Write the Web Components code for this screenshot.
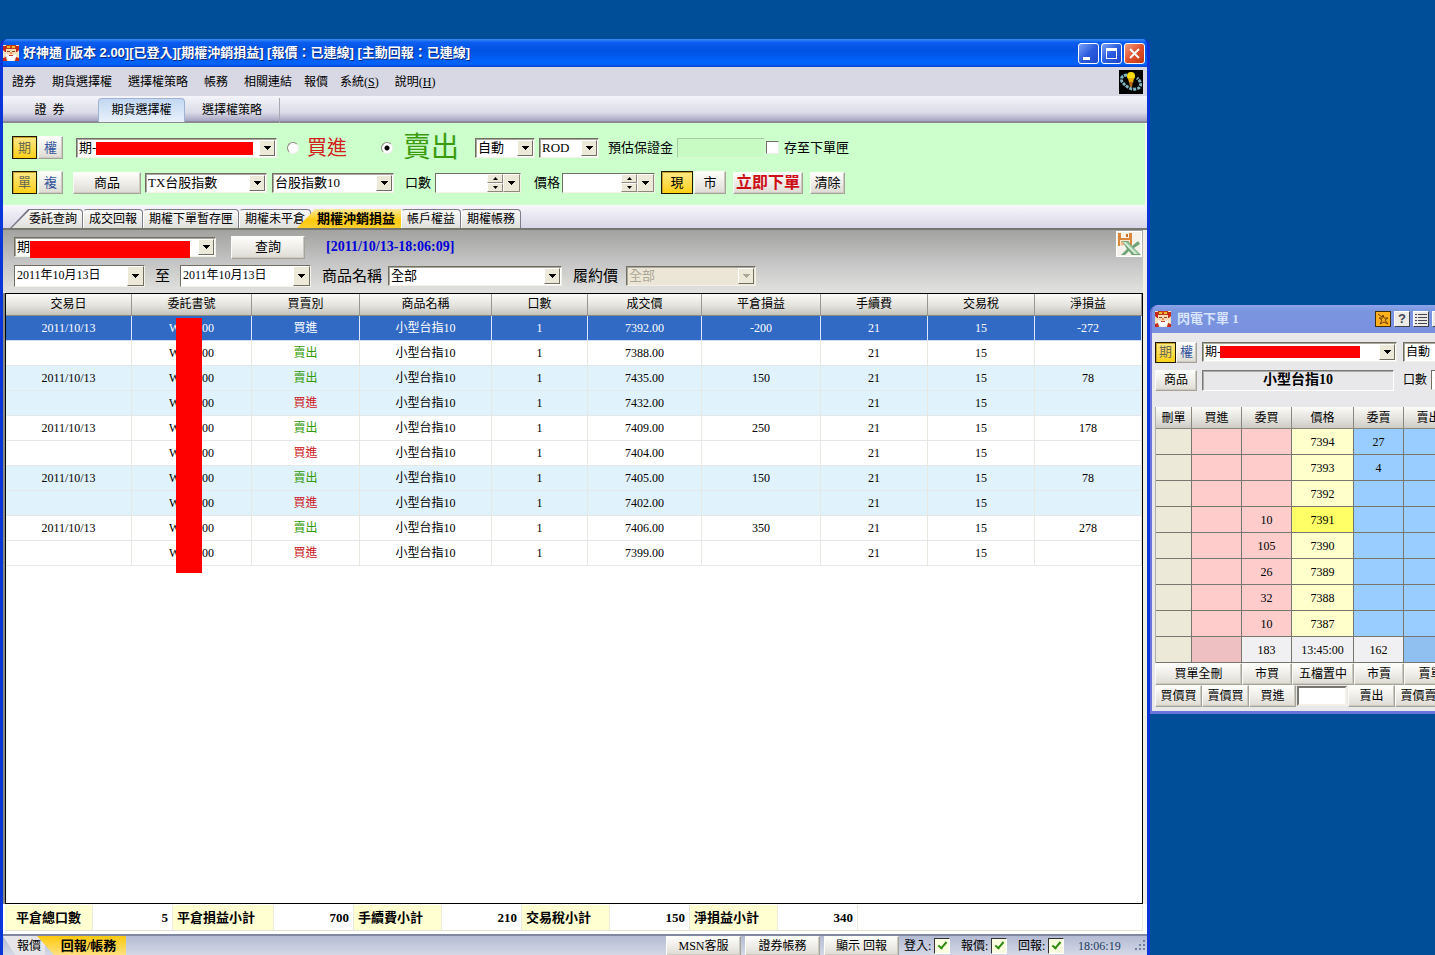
<!DOCTYPE html>
<html lang="zh-Hant">
<head>
<meta charset="utf-8">
<title>好神通</title>
<style>
html, body { height: 100%; margin: 0; }
body { font: 12px/16px "Liberation Serif", "Noto Sans CJK TC", sans-serif; color: #000; background: #004e98; overflow: hidden; }
</style>
</head>
<body>
<trade-desktop></trade-desktop>
<script>
const BASE = `
  *, *::before, *::after { box-sizing: border-box; }
  button, input, select { font: inherit; color: inherit; margin: 0; border-radius: 0; }
  button { padding: 0; white-space: nowrap; }
  svg { display: block; }
`;
const define = (name, html) => {
  customElements.define(name, class extends HTMLElement {
    connectedCallback() {
      if (this.shadowRoot) return;
      const t = document.createElement('template');
      t.innerHTML = typeof html === 'function' ? html(this) : html;
      const root = this.attachShadow({ mode: 'open' });
      const s = document.createElement('style');
      s.textContent = BASE;
      root.append(s, t.content.cloneNode(true));
    }
  });
};
const attr = (el, n, d = '') => el.getAttribute(n) ?? d;
const ARROW = '<svg width="7" height="4" viewBox="0 0 7 4" shape-rendering="crispEdges"><path d="M0 0h7L3.5 4z" fill="currentColor"/></svg>';

/* Mascot in the title bars */
define('mascot-icon', `
  <style>:host { display: block; flex: none; width: 16px; height: 16px; }</style>
  <svg width="16" height="16" viewBox="0 0 16 16">
    <rect width="16" height="16" fill="#f6e3c0"/>
    <path d="M0 1h3v6H2L0 5zM16 1h-3v6h1l2-2z" fill="#c8281c"/>
    <path d="M3 0h10v4H3z" fill="#c23a1c"/><path d="M4 1h8v2H4z" fill="#f3b92c"/><path d="M7 0h2v3H7z" fill="#d8401c"/>
    <path d="M3 4h10v5l-2 4H5L3 9z" fill="#fbd9b4"/>
    <path d="M4 6h3v1H4zM9 6h3v1H9z" fill="#8a4a22"/>
    <path d="M7 7h2v2H7z" fill="#e9915a"/>
    <path d="M3 9l3 1h4l3-1v3l-3 4H6l-3-4z" fill="#fff"/>
    <path d="M6 10h4v1H6z" fill="#d23b26"/>
    <path d="M0 13l3-1 1 4H0zM16 13l-3-1-1 4h4z" fill="#c8281c"/>
  </svg>`);

/* Push button: plain, pressed (gold) or action (red text) */
define('xp-button', `
  <style>
    :host { display: block; height: 22px; }
    button { display: block; width: 100%; height: 100%; line-height: 18px; text-align: center;
      background: linear-gradient(#fdfdfb, #eeede8 50%, #dddbd3); border: 1px solid; border-color: #fbfbf8 #a5a39a #a5a39a #fbfbf8; box-shadow: inset -1px -1px #cbc9c0; }
    :host([blue]) button { color: #33549c; }
    :host([pressed]) button { background: linear-gradient(#ffe98a, #fdd017); border: 1px solid #201800; box-shadow: inset 1px 1px #c9a22a; }
    :host([pressed][blue]) button { color: #6a6a50; }
    :host([action]) button { color: #cc1018; font-size: 16px; font-weight: bold; }
  </style>
  <button type="button"><slot></slot></button>`);

/* Drop-down list with an optional leading label and a masked part */
define('xp-combo', el => `
  <style>
    :host { display: flex; align-items: center; gap: var(--label-gap, 6px); }
    label { font-size: var(--label-size, 13px); white-space: nowrap; }
    .box { position: relative; flex: none; width: var(--w, 60px); height: 20px; }
    select { appearance: none; width: 100%; height: 100%; padding: 0 18px 0 2px; background: #fff; line-height: 16px;
      border: 1px solid; border-color: #716f64 #f4f2e8 #f4f2e8 #716f64; outline: 0; box-shadow: inset 1px 1px #aaa89c; font-size: var(--size, 13px); opacity: 1; }
    select:disabled { background: #ece6d6; color: #aca899; }
    .drop { position: absolute; right: 2px; top: 2px; width: 16px; height: 16px; display: grid; place-items: center; pointer-events: none;
      background: #ece9d8; border: 1px solid; border-color: #fff #716f64 #716f64 #fff; }
    select:disabled ~ .drop { color: #aca899; }
    .mask { position: absolute; left: var(--mask-left); width: var(--mask-width); top: 4px; height: var(--mask-height, 13px); background: #f00; pointer-events: none; }
  </style>
  ${el.hasAttribute('label') ? `<label for="s">${attr(el, 'label')}</label>` : ''}
  <span class="box">
    <select id="s" aria-label="${attr(el, 'label', attr(el, 'name', '帳號'))}" ${el.hasAttribute('disabled') ? 'disabled' : ''}><option>${attr(el, 'value')}</option></select>
    <span class="drop">${ARROW}</span>
    ${el.hasAttribute('masked') ? '<span class="mask"></span>' : ''}
  </span>`);

/* Date box with its own drop button */
define('xp-date', el => `
  <style>
    :host { display: flex; position: relative; width: 131px; height: 22px; background: #fff; border: 1px solid; border-color: #716f64 #f4f2e8 #f4f2e8 #716f64; }
    input { flex: 1; min-width: 0; border: 0; padding: 0 0 2px 2px; background: none; }
    button { width: 17px; height: 20px; display: grid; place-items: center; background: #ece9d8; border: 1px solid; border-color: #fff #716f64 #716f64 #fff; }
  </style>
  <input type="text" aria-label="${attr(el, 'name')}" value="${attr(el, 'value')}"><button type="button" aria-label="選擇日期">${ARROW}</button>`);

/* Number box with up/down and drop buttons */
define('xp-spin', el => `
  <style>
    :host { display: flex; align-items: center; gap: 4px; }
    label { font-size: 13px; white-space: nowrap; }
    :host([small]) label { font-size: 12px; }
    .box { display: flex; width: var(--w, 86px); height: 20px; background: #fff; border: 1px solid; border-color: #716f64 #f4f2e8 #f4f2e8 #716f64; }
    input { flex: 1; min-width: 0; border: 0; background: none; padding: 0 2px; }
    .steps { display: grid; width: 16px; }
    button { display: grid; place-items: center; background: #ece9d8; border: 1px solid; border-color: #fff #8d8a7d #8d8a7d #fff; }
    .drop { width: 17px; }
  </style>
  <label for="n">${attr(el, 'label')}</label>
  <span class="box"><input id="n" type="text" value="${attr(el, 'value')}">
    <span class="steps">
      <button type="button" aria-label="增加"><svg width="5" height="3" viewBox="0 0 5 3"><path d="M0 3h5L2.5 0z"/></svg></button>
      <button type="button" aria-label="減少"><svg width="5" height="3" viewBox="0 0 5 3"><path d="M0 0h5L2.5 3z"/></svg></button>
    </span>
    <button class="drop" type="button" aria-label="選單">${ARROW}</button></span>`);

/* Window frame: title bar, caption tools, body */
define('xp-window', el => `
  <style>
    :host { display: flex; flex-direction: column; border: solid #0a35d8; border-width: 0 3px; border-radius: 7px 7px 0 0; background: #0a35d8; overflow: hidden; }
    header { display: flex; align-items: center; flex: none; height: 28px; gap: 4px; color: #fff; font: bold 13px/18px "Liberation Sans", "Noto Sans CJK TC", sans-serif; text-shadow: 1px 1px #0a2a80; white-space: nowrap;
      background: linear-gradient(#3c8cf8, #0a5ef0 12%, #0052e0 40%, #0060f8 75%, #0162fb 90%, #0245c8); }
    :host(:not([tool])) header { margin: 0 -3px; padding: 0 3px; }
    .tools { margin-left: auto; padding-right: 2px; display: flex; gap: 2px; }
    .tools button { width: 21px; height: 21px; padding: 0; border: 1px solid #fff; border-radius: 3px; background: linear-gradient(135deg, #7ba2f5, #2a5ce0 50%, #2049c8); }
    .tools .close { background: linear-gradient(135deg, #f0a080, #e0502c 50%, #c03810); }
    .main { flex: 1; min-height: 0; display: flex; flex-direction: column; background: #f2f0e4; }
    :host([tool]) { border: solid #6a74dc; border-width: 0 2px 3px; background: #6a74dc; border-radius: 8px 8px 0 0; }
    :host([tool]) header { margin: 0 -2px; padding: 0 0 0 5px; gap: 6px; color: #d8e4fc; text-shadow: none; font-family: "Liberation Serif", "Noto Sans CJK TC", sans-serif;
      background: linear-gradient(#8ca4ec, #7a96df 20%, #7a90e0); }
    :host([tool]) .tools { padding: 0; gap: 3px; }
    :host([tool]) .tools button { width: 16px; height: 16px; border-radius: 0; border: 1px solid; border-color: #fff #40404c #40404c #fff; background: #ecebe6; color: #445; display: grid; place-items: center; font: bold 13px/14px "Liberation Sans", sans-serif; }
    :host([tool]) .tools .on { background: #ffb01c; border-color: #403008; color: #6a4000; }
  </style>
  <header><mascot-icon></mascot-icon><span>${attr(el, 'caption')}</span>
    <span class="tools">${el.hasAttribute('tool') ? `
      <button class="on" type="button" aria-label="釘選"><svg width="12" height="12" viewBox="0 0 12 12" fill="none" stroke="currentColor"><path d="M1 1l4 3 1-2 1 3h4L8 7l3 4-4-2-4 2 2-4-3-2h4"/></svg></button>
      <button type="button">?</button>
      <button type="button" aria-label="清單"><svg width="12" height="12" viewBox="0 0 12 12" stroke="currentColor" shape-rendering="crispEdges"><path d="M0 1.5h2M3 1.5h9M0 4.5h2M3 4.5h9M0 7.5h2M3 7.5h9M0 10.5h2M3 10.5h9"/></svg></button>
      <button type="button" aria-label="最小化"></button><button type="button" aria-label="最大化"></button><button type="button" aria-label="關閉"></button>` : `
      <button type="button" aria-label="最小化"><svg width="19" height="19" viewBox="0 0 19 19"><path d="M4 13h7v3H4z" fill="#fff"/></svg></button>
      <button type="button" aria-label="最大化"><svg width="19" height="19" viewBox="0 0 19 19"><path d="M4 4h11v11H4zM5 7v7h9V7z" fill="#fff" fill-rule="evenodd"/></svg></button>
      <button class="close" type="button" aria-label="關閉"><svg width="19" height="19" viewBox="0 0 19 19" stroke="#fff" stroke-width="2"><path d="M5 5l9 9M14 5l-9 9"/></svg></button>`}
    </span></header>
  <div class="main"><slot></slot></div>`);

/* Menu line with the bulb picture at its end */
define('menu-bar', `
  <style>
    :host { display: flex; align-items: center; height: 29px; flex: none; background: #d8d8e4; padding: 0 4px 0 9px; }
    nav, .books { display: flex; gap: 16px; }
    nav { gap: 12px; }
    a { color: inherit; text-decoration: none; white-space: nowrap; }
    svg { margin-left: auto; }
  </style>
  <nav><span class="books"><a href="#">證券</a><a href="#">期貨選擇權</a><a href="#">選擇權策略</a><a href="#">帳務</a><a href="#">相關連結</a></span><a href="#">報價</a><span class="books"><a href="#">系統(<u>S</u>)</a><a href="#">說明(<u>H</u>)</a></span></nav>
  <svg width="24" height="24" viewBox="0 0 24 24"><rect width="24" height="24"/>
    <path d="M8 5C2 5 1 10 4 13s7 7 13 6 6-7 1-11" fill="none" stroke="#7fb4c0" stroke-width="3" stroke-dasharray="3 1"/>
    <circle cx="12" cy="6" r="4" fill="#f8dc10"/><path d="M9 8h6l-1 5h-4z" fill="#e8b010"/><path d="M10 12h4l-1 5h-2z" fill="#b06818"/></svg>`);

/* Product switch under the menu */
define('product-switch', `
  <style>
    :host { display: flex; flex: none; height: 27px; padding-left: 1px; align-items: flex-end; background: linear-gradient(#f4f4fa, #dcdce8 60%, #a8a6c4 92%, #8c8a96 93%); }
    button { border: 0; background: none; height: 25px; padding: 0 0 2px; }
    .stock { width: 94px; padding-right: 3px; } .opt { width: 95px; border-right: 1px solid #a8a8b4; }
    .on { width: 87px; height: 24px; margin-bottom: 1px; border: 1px solid #9fb2d4; border-bottom: 0; border-radius: 4px 4px 0 0; background: linear-gradient(#c3d8f2, #e9f1fc); }
  </style>
  <button class="stock" type="button">證&nbsp; 券</button><button class="on" type="button">期貨選擇權</button><button class="opt" type="button">選擇權策略</button>`);

/* Order entry */
define('order-form', `
  <style>
    :host { display: grid; flex: none; height: 82px; align-content: start; padding: 13px 0 0 9px; row-gap: 12px; background: #ccffcc; border-right: 2px solid #f4f4f0; }
    .row { display: grid; height: 23px; align-items: center; justify-content: start; font-size: 13px; }
    .one { grid-template-columns: 64px 211px 94px 94px 64px 69px 158px auto; }
    .two { grid-template-columns: 61px 72px 127px 133px 129px 127px 72px 77px 35px; }
    .pair { display: flex; gap: 1px; }
    .pair xp-button { width: 25px; height: 23px; }
    .wide xp-button { width: 32px; }
    .goods { width: 68px; } .action { width: 70px; }
    .radio { display: flex; align-items: center; gap: 8px; height: 23px; white-space: nowrap; }
    .radio input { appearance: none; width: 12px; height: 12px; flex: none; border-radius: 50%; border: 1px solid #8a887c; border-right-color: #eee; border-bottom-color: #eee; background: #fff; }
    .radio input:checked { background: radial-gradient(circle, #000 0 2px, #fff 3px); }
    .buy { color: #d02018; font-size: 20px; } .sell { color: #3a9c0c; font-size: 28px; gap: 10px; line-height: 23px; }
    .margin { display: flex; align-items: center; gap: 4px; }
    .margin input { width: 88px; height: 20px; background: #c8fac4; border: 1px solid #a8cca4; border-right-color: #d8f8d4; border-bottom-color: #d8f8d4; }
    .tick { display: flex; align-items: center; gap: 5px; }
    .tick input { appearance: none; width: 13px; height: 13px; background: #fff; border: 1px solid; border-color: #716f64 #eee #eee #716f64; }
  </style>
  <div class="row one">
    <span class="pair"><xp-button pressed blue>期</xp-button><xp-button blue>權</xp-button></span>
    <xp-combo value="期-" masked style="--w:201px;--mask-left:20px;--mask-width:157px"></xp-combo>
    <label class="radio buy"><input type="radio" name="side">買進</label>
    <label class="radio sell"><input type="radio" name="side" checked>賣出</label>
    <xp-combo name="開平倉" value="自動"></xp-combo>
    <xp-combo name="委託條件" value="ROD"></xp-combo>
    <span class="margin"><label for="m">預估保證金</label><input id="m" type="text" readonly></span>
    <label class="tick"><input type="checkbox">存至下單匣</label>
  </div>
  <div class="row two">
    <span class="pair"><xp-button pressed blue>單</xp-button><xp-button blue>複</xp-button></span>
    <xp-button class="goods">商品</xp-button>
    <xp-combo name="商品" value="TX台股指數" style="--w:122px"></xp-combo>
    <xp-combo name="契約" value="台股指數10" style="--w:122px"></xp-combo>
    <xp-spin label="口數"></xp-spin>
    <xp-spin label="價格" style="--w:93px;gap:2px"></xp-spin>
    <span class="pair wide"><xp-button pressed>現</xp-button><xp-button>市</xp-button></span>
    <xp-button action class="action">立即下單</xp-button>
    <xp-button>清除</xp-button>
  </div>`);

/* Folder tabs of the report area */
define('report-tabs', `
  <style>
    :host { display: flex; box-sizing: border-box; flex: none; height: 25px; padding: 4px 0 0 7px; background: linear-gradient(#f8f8fc, #d8d6e6); border-bottom: 2px solid #77776f; }
    button { position: relative; border: 0; background: none; height: 19px; padding: 0 6px; line-height: 18px; z-index: 0; }
    button::before { content: ""; position: absolute; inset: 0; z-index: -1; border: 1px solid #7c7c8c; border-left-color: #fff; border-bottom: 0; border-radius: 4px 4px 0 0; background: linear-gradient(#fafafa, #dfdfdc); }
    .first { padding-left: 19px; }
    .first::before { border-left: 0; clip-path: polygon(18px 0, 100% 0, 100% 100%, 0 100%); background: linear-gradient(to bottom right, #7c7c8c 50%, transparent 54%) 0 0 / 19px 19px no-repeat, linear-gradient(#fafafa, #dfdfdc); }
    .on { font-size: 13px; font-weight: bold; z-index: 1; }
    .on::before { left: -14px; border: 0; border-radius: 0; clip-path: polygon(18px 0, 100% 0, 100% 100%, 0 100%); background: linear-gradient(#ffe89a, #fdc90c 60%, #fdd030); }
  </style>
  <button class="first" type="button">委託查詢</button><button type="button">成交回報</button><button type="button">期權下單暫存匣</button><button type="button">期權未平倉</button><button class="on" type="button">期權沖銷損益</button><button type="button">帳戶權益</button><button type="button">期權帳務</button>`);

/* Search line above the result table */
define('query-panel', `
  <style>
    :host { display: grid; flex: none; height: 63px; padding: 1px 1px 0 11px; align-content: start; background: linear-gradient(#a2a2a0, #c4c4c4 50%, #e2e2e0); border-right: 4px solid #f2f0e4; }
    .row { display: grid; align-items: center; justify-content: start; }
    .one { grid-template-columns: 217px 95px 1fr 26px; justify-content: stretch; height: 32px; }
    .two { grid-template-columns: 141px 25px 142px 251px auto; height: 26px; }
    .query { width: 74px; height: 23px; font-size: 13px; }
    time { color: #0000d8; font: bold 14px/18px "Liberation Serif", serif; }
    .to { font-size: 15px; }
    .excel { align-self: start; width: 26px; height: 26px; border: 1px solid #fff; background: #f4f2ea; }
  </style>
  <div class="row one">
    <xp-combo value="期" masked style="--w:202px;--mask-left:16px;--mask-width:160px;--mask-height:17px"></xp-combo>
    <xp-button class="query">查詢</xp-button>
    <time datetime="2011-10-13T18:06:09">[2011/10/13-18:06:09]</time>
    <button class="excel" type="button" aria-label="匯出 Excel"><svg width="24" height="24" viewBox="0 0 24 24">
      <path d="M1 1h14v13H1z" fill="#d8883c"/><path d="M4 1h8v5H4z" fill="#fff4e4"/><path d="M9 2h2v3H9z" fill="#c8702c"/><path d="M3 8h10v6H3z" fill="#fbe6cc"/><path d="M4 10h8M4 12h8" stroke="#d8883c"/>
      <path d="M5 9h6l4 5 6-5 2 3-6 4 7 7h-9l-3-4-4 4H4l6-6z" fill="#6fa477"/><path d="M6 10h4l12 12h-5z" fill="#a9cfae"/><path d="M6 10h2l12 12h-2z" fill="#dff0de"/></svg></button>
  </div>
  <div class="row two">
    <xp-date name="起始日" value="2011年10月13日"></xp-date><span class="to">至</span><xp-date name="結束日" value="2011年10月13日"></xp-date>
    <xp-combo label="商品名稱" value="全部" style="--label-size:15px;--w:174px"></xp-combo>
    <xp-combo label="履約價" value="全部" disabled style="--label-size:15px;--label-gap:8px;--w:130px"></xp-combo>
  </div>`);

/* Closed positions */
const HEADS = ['交易日', '委託書號', '買賣別', '商品名稱', '口數', '成交價', '平倉損益', '手續費', '交易稅', '淨損益'];
const WIDTHS = [126, 120, 108, 132, 96, 114, 119, 107, 107, 107];
const DEALS = [
  ['2011/10/13', '買進', '7392.00', '-200', '-272'], ['', '賣出', '7388.00', '', ''],
  ['2011/10/13', '賣出', '7435.00', '150', '78'], ['', '買進', '7432.00', '', ''],
  ['2011/10/13', '賣出', '7409.00', '250', '178'], ['', '買進', '7404.00', '', ''],
  ['2011/10/13', '賣出', '7405.00', '150', '78'], ['', '買進', '7402.00', '', ''],
  ['2011/10/13', '賣出', '7406.00', '350', '278'], ['', '買進', '7399.00', '', '']
];
define('deal-grid', () => `
  <style>
    :host { display: flex; flex: 1; min-height: 0; border-left: 2px solid #8a8a84; padding-right: 4px; }
    .sheet { position: relative; flex: 1; background: #fff; border: 1px solid #000; overflow: hidden; }
    table { width: 100%; table-layout: fixed; border-collapse: separate; border-spacing: 0; }
    th { height: 22px; padding: 0 0 2px; font-weight: normal; background: linear-gradient(#fbfbf8, #e4e3dd 55%, #c4c3bc); border-right: 1px solid #9a988e; border-bottom: 1px solid #8a887e; }
    td { height: 25px; padding: 0; text-align: center; border-right: 1px solid #e8e8e0; border-bottom: 1px solid #e4e8e8; }
    tr.alt td { background: #e0f2fc; }
    tr.sel td { background: #316ac5; color: #fff; border-right-color: #dce8fc; border-bottom-color: #c8dcf8; }
    .buy { color: #cc1420; } .sell { color: #339a08; } .sel .buy { color: #fff; }
    .no { display: inline-flex; justify-content: space-between; width: 45px; }
    .mask { position: absolute; left: 170px; top: 24px; width: 26px; height: 255px; background: #f00; }
  </style>
  <div class="sheet"><table><colgroup>${WIDTHS.map(w => `<col style="width:${w}px">`).join('')}</colgroup>
    <thead><tr>${HEADS.map(h => `<th scope="col">${h}</th>`).join('')}</tr></thead>
    <tbody>${DEALS.map(([d, s, p, g, n], i) => `<tr class="${i === 0 ? 'sel' : i % 4 > 1 ? 'alt' : ''}"><td>${d}</td><td><span class="no"><span>W</span><span>00</span></span></td><td class="${s === '買進' ? 'buy' : 'sell'}">${s}</td><td>小型台指10</td><td>1</td><td>${p}</td><td>${g}</td><td>21</td><td>15</td><td>${n}</td></tr>`).join('')}</tbody>
  </table><span class="mask"></span></div>`);

/* Totals under the table */
const SUMS = [['平倉總口數', '5', 88], ['平倉損益小計', '700', 101], ['手續費小計', '210', 88], ['交易稅小計', '150', 88], ['淨損益小計', '340', 88]];
define('total-line', () => `
  <style>
    :host { display: block; flex: none; padding: 1px 4px 3px 2px; background: #fff; border-bottom: 2px solid #8088a4; }
    table { width: 100%; table-layout: fixed; border-spacing: 0; font-size: 13px; font-weight: bold; border-bottom: 1px solid #e4e2d4; }
    th, td { height: 25px; padding: 0 4px; white-space: nowrap; border-right: 1px solid #eceae0; }
    th { text-align: left; background: #ffffd2; }
    th:first-child { text-align: center; }
    td { text-align: right; }
  </style>
  <table><colgroup>${SUMS.map(s => `<col style="width:${s[2]}px"><col style="width:80px">`).join('')}<col></colgroup>
  <tbody><tr>${SUMS.map(s => `<th scope="row">${s[0]}</th><td>${s[1]}</td>`).join('')}<td></td></tr></tbody></table>`);

/* Status line */
const tick = name => `<label>${name}:<input type="checkbox" checked></label>`;
define('status-line', `
  <style>
    :host { display: flex; flex: none; height: 19px; overflow: hidden; background: linear-gradient(#b4bcd4, #d4d8e6); align-items: center; }
    .tab { position: relative; z-index: 0; height: 19px; border: 0; background: none; }
    .tab::before { content: ""; position: absolute; inset: 0; z-index: -1; background: #e6e6ea; clip-path: polygon(0 0, 100% 0, 100% 100%, 12px 100%); }
    .quote { width: 42px; padding-left: 10px; }
    .on { width: 81px; font-size: 13px; font-weight: bold; padding-left: 6px; }
    .on::before { left: -8px; background: linear-gradient(#fdc90c, #ffe080); clip-path: polygon(0 0, 100% 0, 100% 100%, 17px 100%); }
    .btns { display: flex; gap: 4px; margin-left: auto; padding-right: 5px; }
    .btns xp-button { width: 75px; height: 20px; }
    label { display: flex; align-items: center; width: 57px; justify-content: space-between; padding-right: 11px; }
    input { appearance: none; width: 16px; height: 16px; border: 1px solid #333; border-right-color: #fff; border-bottom-color: #fff; background: #fbfde0; display: grid; place-items: center; }
    input::before { content: ""; width: 5px; height: 9px; border: solid #2f8c10; border-width: 0 2px 2px 0; transform: rotate(40deg); margin-bottom: 3px; }
    time { width: 60px; color: #203a60; padding-left: 3px; }
  </style>
  <button class="tab quote" type="button">報價</button><button class="tab on" type="button">回報/帳務</button>
  <span class="btns"><xp-button>MSN客服</xp-button><xp-button>證券帳務</xp-button><xp-button>顯示 回報</xp-button></span>
  ${tick('登入')}${tick('報價')}${tick('回報')}
  <time>18:06:19</time>
  <svg width="12" height="12" viewBox="0 0 12 12" fill="#7080a0"><path d="M8 0h2v2H8zM4 4h2v2H4zM8 4h2v2H8zM0 8h2v2H0zM4 8h2v2H4zM8 8h2v2H8z"/></svg>`);

/* Five-level price ladder */
const LADDER = [['', 7394, 27], ['', 7393, 4], ['', 7392, ''], [10, 7391, ''], [105, 7390, ''], [26, 7389, ''], [32, 7388, ''], [10, 7387, '']];
define('flash-order', () => `
  <style>
    :host { display: block; background: #e8e8ea; padding: 8px 3px 4px; }
    .row { display: grid; grid-template-columns: 47px 201px auto; height: 22px; align-items: center; }
    .row + .row { margin-top: 6px; }
    .pair { display: flex; width: 42px; font-size: 13px; }
    .pair xp-button { flex: 1; height: 21px; }
    .goods { width: 42px; height: 21px; }
    output { display: block; width: 192px; height: 21px; text-align: center; font-size: 14px; font-weight: bold; line-height: 18px; border: 1px solid; border-color: #7a7a74 #fff #fff #7a7a74; box-shadow: inset 1px 1px #aaa; }
    table { width: 100%; table-layout: fixed; border-spacing: 0; margin-top: 16px; border-left: 1px solid #b0b0a8; }
    th { height: 22px; padding: 0; font-weight: normal; background: linear-gradient(#fbfbf8, #e4e3dd 55%, #cccbc4); border: solid #8a887e; border-width: 0 1px 1px 0; }
    td { height: 26px; padding: 0; text-align: center; border: solid #77776f; border-width: 0 1px 1px 0; background: #99ccff; }
    td:first-child, td:last-child { background: #ece9d8; }
    td:nth-child(2), td:nth-child(3) { background: #ffcccc; }
    td:nth-child(4) { background: #ffffcc; } td.now { background: #ffff66; }
    .sum td:nth-child(2) { background: #eec0c2; } .sum td:nth-child(6) { background: #90c0f0; }
    .sum td:nth-child(3), .sum td:nth-child(4), .sum td:nth-child(5) { background: #f0f0f2; }
    .acts { display: grid; height: 22px; grid-template-columns: 87px 50px 62px 50px auto; }
    .acts.low { grid-template-columns: repeat(3, 47px) 52px repeat(3, 47px); }
    .low input { height: 20px; margin: 0 1px; min-width: 0; border: 2px solid; border-color: #77776f #f4f2e8 #f4f2e8 #77776f; align-self: center; background: #fff; }
  </style>
  <div class="row"><span class="pair"><xp-button pressed blue>期</xp-button><xp-button blue>權</xp-button></span>
    <xp-combo value="期-" masked style="--w:195px;--size:12px;--mask-left:18px;--mask-width:140px;--mask-height:12px"></xp-combo><xp-combo name="開平倉" value="自動" style="--size:12px"></xp-combo></div>
  <div class="row"><xp-button class="goods">商品</xp-button><output>小型台指10</output><xp-spin small label="口數" value="1" style="--w:60px"></xp-spin></div>
  <table><colgroup><col style="width:36px"><col style="width:50px"><col style="width:50px"><col style="width:62px"><col style="width:50px"><col style="width:50px"><col></colgroup>
    <thead><tr>${['刪單', '買進', '委買', '價格', '委賣', '賣出', ''].map(h => h ? `<th scope="col">${h}</th>` : '<th></th>').join('')}</tr></thead>
    <tbody>${LADDER.map(([b, p, s]) => `<tr><td></td><td></td><td>${b}</td><td class="${p === 7391 ? 'now' : ''}">${p}</td><td>${s}</td><td></td><td></td></tr>`).join('')}
    <tr class="sum"><td></td><td></td><td>183</td><td>13:45:00</td><td>162</td><td></td><td></td></tr></tbody></table>
  <div class="acts"><xp-button>買單全刪</xp-button><xp-button>市買</xp-button><xp-button>五檔置中</xp-button><xp-button>市賣</xp-button><xp-button>賣單全刪</xp-button></div>
  <div class="acts low"><xp-button>買價買</xp-button><xp-button>賣價買</xp-button><xp-button>買進</xp-button><input type="text" aria-label="價格"><xp-button>賣出</xp-button><xp-button>賣價賣</xp-button></div>`);

/* The desktop with its two windows */
define('trade-desktop', `
  <style>
    :host { display: block; position: relative; height: 100vh; overflow: hidden; background: #004e98; }
    .app { position: absolute; left: 0; top: 39px; bottom: 0; width: calc(100% - 285px); }
    .flash { position: absolute; left: calc(100% - 285px); top: 305px; width: 336px; }
  </style>
  <xp-window class="app" caption="好神通 [版本 2.00][已登入][期權沖銷損益] [報價：已連線] [主動回報：已連線]">
    <menu-bar></menu-bar><product-switch></product-switch><order-form></order-form><report-tabs></report-tabs>
    <query-panel></query-panel><deal-grid></deal-grid><total-line></total-line><status-line></status-line>
  </xp-window>
  <xp-window class="flash" tool caption="閃電下單 1"><flash-order></flash-order></xp-window>`);
</script>
</body>
</html>
